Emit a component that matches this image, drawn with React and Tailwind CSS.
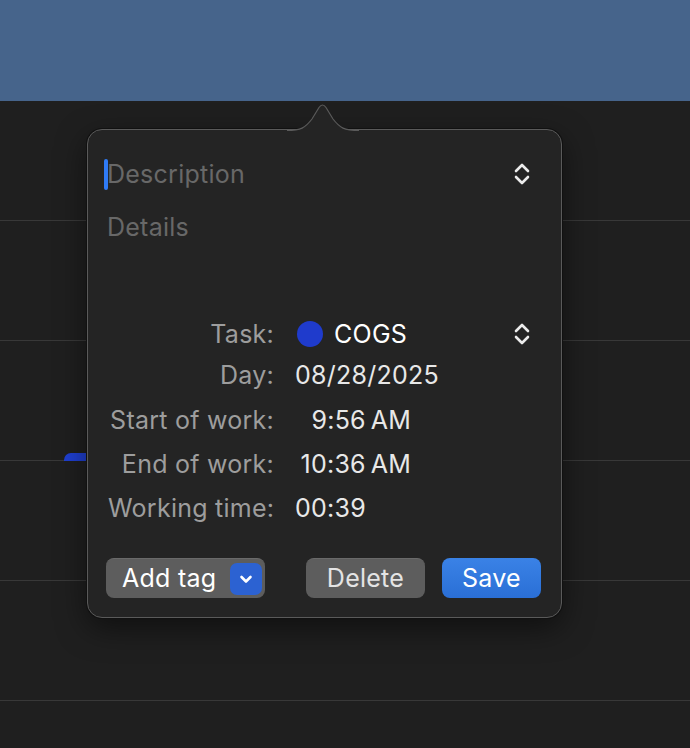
import React from "react";

const font = { fontFamily: "Inter, 'Noto Sans', sans-serif" };

const UpDown = ({ className = "" }) => (
  <svg width="18" height="26" viewBox="0 0 18 26" className={className} fill="none">
    <path d="M3 10 L9 4 L15 10" stroke="#ececec" strokeWidth="2.6" strokeLinecap="round" strokeLinejoin="round" />
    <path d="M3 16 L9 22 L15 16" stroke="#ececec" strokeWidth="2.6" strokeLinecap="round" strokeLinejoin="round" />
  </svg>
);

const Row = ({ label, h = "h-[44px]", children }) => (
  <div className={`grid grid-cols-[166px_1fr] gap-x-[21px] items-center ${h}`}>
    <div className="text-right text-[#9d9d9d] whitespace-nowrap">{label}</div>
    <div className="flex items-center text-[#e8e8e8] whitespace-nowrap">{children}</div>
  </div>
);

export default function App() {
  return (
    <div className="relative w-[690px] h-[748px] overflow-hidden bg-[#1f1f1f]" style={font}>
      {/* calendar backdrop */}
      <div className="h-[101px] bg-[#46648b]" />
      <div className="flex flex-col">
        <div className="h-[120px] border-b border-[#383838]" />
        <div className="h-[120px] border-b border-[#383838]" />
        <div className="h-[120px] border-b border-[#383838]" />
        <div className="h-[120px] border-b border-[#383838]" />
        <div className="h-[120px] border-b border-[#383838]" />
      </div>
      <div className="absolute left-[64px] top-[453px] w-[30px] h-[8px] rounded-tl-[7px] bg-[#1f3fd0]" />

      {/* popover */}
      <div className="absolute left-[87px] top-[129px] w-[475px] h-[489px] rounded-[15px] border border-[#5a5a5a] bg-[#242424] shadow-[0_0_0_1px_#111,0_10px_30px_rgba(0,0,0,0.5)] text-[25px] tracking-[0.01em] leading-none">
        <svg className="absolute left-[199px] top-[-28px]" width="72" height="32" viewBox="0 0 72 32">
          <path d="M0 32 L0 28.5 C14 28.5 18 26 25 17 L32 5.5 Q35.5 0.5 39 5.5 L46 17 C53 26 57 28.5 72 28.5 L72 32 Z" fill="#242424" />
          <path d="M0 28.5 C14 28.5 18 26 25 17 L32 5.5 Q35.5 0.5 39 5.5 L46 17 C53 26 57 28.5 72 28.5" fill="none" stroke="#5a5a5a" strokeWidth="1.2" />
        </svg>

        <div className="flex flex-col pt-[28px] pl-[16px] pr-[30px]">
          <div className="flex items-center h-[32px]">
            <div className="w-[4px] h-[31px] rounded-full bg-[#2f7bf6]" />
            <div className="text-[#686868] -ml-[1px]">Description</div>
            <UpDown className="ml-auto" />
          </div>
          <div className="flex items-center h-[32px] mt-[21px] pl-[3px] text-[#686868]">Details</div>

          <div className="flex flex-col mt-[71px] pl-[4px]">
            <Row label="Task:" h="h-[40px]">
              <div className="w-[26px] h-[26px] rounded-full bg-[#1f3bcc] ml-[2px] shrink-0" />
              <span className="ml-[11px] text-white">COGS</span>
              <UpDown className="ml-auto" />
            </Row>
            <Row label="Day:" h="h-[42px]">
              08/28/2025
            </Row>
            <div className="mt-[2px]" />
            <Row label="Start of work:">
              <span className="w-[116px] text-right">9:56&thinsp;AM</span>
            </Row>
            <Row label="End of work:">
              <span className="w-[116px] text-right">10:36&thinsp;AM</span>
            </Row>
            <Row label="Working time:">00:39</Row>
          </div>
        </div>

        <div className="flex items-center mt-[28px] pl-[18px] h-[40px]">
          <div className="shrink-0 flex items-center h-[40px] w-[159px] rounded-[8px] bg-[#5d5d5d] border-t border-[#6a6a6a] pl-[16px] pr-[3px]">
            <span className="text-white">Add tag</span>
            <div className="ml-auto w-[32px] h-[32px] rounded-[7px] bg-[#2c62d2] flex items-center justify-center">
              <svg width="14" height="10" viewBox="0 0 14 10" fill="none">
                <path d="M2.5 3 L7 7.5 L11.5 3" stroke="white" strokeWidth="2.6" strokeLinecap="round" strokeLinejoin="round" />
              </svg>
            </div>
          </div>
          <div className="shrink-0 ml-[41px] h-[40px] w-[119px] rounded-[8px] bg-[#5d5d5d] border-t border-[#6a6a6a] flex items-center justify-center text-[#e4e4e4]">
            Delete
          </div>
          <div className="shrink-0 ml-[17px] h-[40px] w-[99px] rounded-[8px] bg-gradient-to-b from-[#3a82e6] to-[#2a6fd6] flex items-center justify-center text-white">
            Save
          </div>
        </div>
      </div>
    </div>
  );
}
